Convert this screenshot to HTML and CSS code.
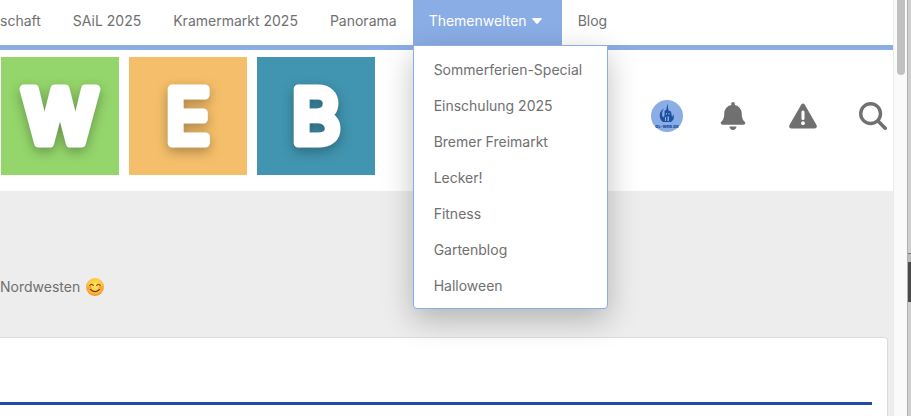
FILE: index.html
```html
<!DOCTYPE html>
<html lang="de">
<head>
  <meta charset="UTF-8">
  <meta name="viewport" content="width=device-width, initial-scale=1.0">
  <title>OL-WEB.DE</title>
  <link rel="stylesheet" href="styles.css">
</head>
<body>
  <div class="window">
    <div class="page">
      <nav class="navbar">
        <a href="#" class="nav-link first">schaft</a>
        <a href="#" class="nav-link">SAiL 2025</a>
        <a href="#" class="nav-link">Kramermarkt 2025</a>
        <a href="#" class="nav-link">Panorama</a>
        <div class="dropdown">
          <a href="#" class="nav-link active">Themenwelten
            <svg class="caret" viewBox="0 0 10 6"><path d="M1 0h8q1.200 .2.500 1.200L5.800 5.600q-.8.700-1.600 0L.5 1.200Q-.2.200 1 0z" fill="currentColor"/></svg>
          </a>
          <div class="dropdown-menu">
            <a href="#">Sommerferien-Special</a>
            <a href="#">Einschulung 2025</a>
            <a href="#">Bremer Freimarkt</a>
            <a href="#">Lecker!</a>
            <a href="#">Fitness</a>
            <a href="#">Gartenblog</a>
            <a href="#">Halloween</a>
          </div>
        </div>
        <a href="#" class="nav-link">Blog</a>
      </nav>

      <header class="header">
        <a href="#" class="logo">
          <svg class="tile green" viewBox="0 0 118 118"><text x="59" y="86">W</text></svg>
          <svg class="tile orange" viewBox="0 0 118 118"><text x="59" y="86">E</text></svg>
          <svg class="tile teal" viewBox="0 0 118 118"><text x="59" y="86">B</text></svg>
        </a>
        <div class="tools">
          <a href="#" class="avatar" aria-label="Profil">
            <svg viewBox="0 0 32 32">
              <path d="M13 8.500C7.500 11 7.500 19 12 22h8c3-2 3.500-5 2.200-8-.2 1.500-.7 2.500-1.200 3l-1-5.500-2.500-1-1-7-1.200 6-1.800 1.500v5l-1.500 1.500c-1.500-2.500-1.300-6 1-9z" fill="#1f509e"/>
              <path d="M15 13h1v1.500h-1zM17.500 13h1v1.500h-1zM14 17h1v4h-1zM16.500 16.500H18V21h-1.500z" fill="#8aade5"/>
              <text x="16" y="27.500">OL-WEB.DE</text>
            </svg>
          </a>
          <div class="actions">
            <button type="button" class="icon-btn" aria-label="Benachrichtigungen">
              <svg viewBox="-32 0 512 512"><path fill="currentColor" d="M224 512c35.320 0 63.970-28.650 63.970-64H160.030c0 35.350 28.650 64 63.970 64zm215.390-149.710c-19.320-20.760-55.470-51.990-55.470-154.290 0-77.700-54.480-139.900-127.940-155.160V32c0-17.670-14.320-32-31.980-32s-31.980 14.330-31.980 32v20.840C118.560 68.100 64.080 130.300 64.080 208c0 102.300-36.150 133.530-55.470 154.290-6 6.450-8.660 14.160-8.610 21.710.11 16.400 12.980 32 32.100 32h383.800c19.120 0 32-15.600 32.100-32 .05-7.550-2.610-15.270-8.610-21.710z"/></svg>
            </button>
            <button type="button" class="icon-btn" aria-label="Melden">
              <svg viewBox="0 0 28 28">
                <path fill="currentColor" d="M12.300 2.600q1.700-2 3.400 0l11.800 20.300q1.200 3.200-1.900 3.600H2.400q-3.100-.4-1.900-3.600z"/>
                <path d="M14 10v6.500" stroke="#fff" stroke-width="3" stroke-linecap="round"/>
                <circle cx="14" cy="21.200" r="1.900" fill="#fff"/>
              </svg>
            </button>
            <button type="button" class="icon-btn" aria-label="Suche">
              <svg viewBox="0 0 28 28" fill="none" stroke="currentColor" stroke-linecap="round">
                <circle cx="11.600" cy="11.600" r="9.900" stroke-width="3.400"/>
                <path d="M19 19l7.200 7.200" stroke-width="3.600"/>
              </svg>
            </button>
          </div>
        </div>
      </header>

      <main>
        <p class="intro">Nordwesten
          <svg class="smiley" viewBox="0 0 20 20" role="img" aria-label="Smiley">
            <defs>
              <radialGradient id="face" cx="50%" cy="40%" r="60%">
                <stop offset="0" stop-color="#ffe45c"/>
                <stop offset=".65" stop-color="#fdc63a"/>
                <stop offset="1" stop-color="#ef8e22"/>
              </radialGradient>
            </defs>
            <circle cx="10" cy="10" r="9" fill="url(#face)"/>
            <circle cx="4.500" cy="11" r="2.200" fill="#f5803a" opacity=".5"/>
            <circle cx="15.500" cy="11" r="2.200" fill="#f5803a" opacity=".5"/>
            <path d="M4.800 8.500q1.800-2.600 3.500 0M11.700 8.500q1.800-2.600 3.500 0M5.500 12.500q4.500 4.200 9 0" fill="none" stroke="#6b3c12" stroke-width="1.100" stroke-linecap="round"/>
          </svg>
        </p>
        <section class="card">
          <hr class="line">
        </section>
      </main>
    </div>

    <div class="scrollbar"><div class="thumb"></div></div>
    <div class="edge"><div class="edge-dark"></div></div>
  </div>
</body>
</html>
```

FILE: styles.css
```css
* {
  box-sizing: border-box;
}

body {
  margin: 0;
  font-family: Inter, "Liberation Sans", sans-serif;
  font-size: 14px;
  color: #707070;
  background-color: #ededed;
}

a {
  color: inherit;
  text-decoration: none;
}

.window {
  display: flex;
  height: 100vh;
  overflow: hidden;
}

.page {
  flex: 1;
  min-width: 0;
  display: flex;
  flex-direction: column;
}

/* navigation */
.navbar {
  display: flex;
  background-color: #fff;
  border-bottom: 5px solid #8aade5;
}

.nav-link {
  display: flex;
  align-items: center;
  gap: 5px;
  height: 45px;
  padding: 0 16px 4px;
  white-space: nowrap;
}

.nav-link.first {
  padding-left: 0;
}

.nav-link.active {
  background-color: #8aade5;
  color: #fff;
  padding-right: 20px;
}

.caret {
  width: 10px;
  height: 6px;
}

.dropdown {
  position: relative;
}

.dropdown-menu {
  position: absolute;
  top: 100%;
  left: 0;
  z-index: 10;
  min-width: 195px;
  padding: 6px 0 4px;
  background-color: #fff;
  border: 1px solid #8aade5;
  border-radius: 0 0 4px 4px;
  box-shadow: 0 10px 30px rgba(0, 0, 0, 0.25);
}

.dropdown-menu a {
  display: block;
  padding: 0 20px;
  line-height: 36px;
  white-space: nowrap;
}

/* header with logo */
.header {
  display: flex;
  justify-content: space-between;
  padding: 7px 6px 16px 1px;
  background-color: #fff;
}

.logo {
  display: flex;
  gap: 10px;
}

.tile {
  width: 118px;
  height: 118px;
}

.tile text {
  font-family: Inter, sans-serif;
  font-size: 74px;
  font-weight: 400;
  text-anchor: middle;
  fill: #fff;
  stroke: #fff;
  stroke-width: 9px;
  stroke-linejoin: round;
  filter: drop-shadow(0 4px 6px rgba(0, 0, 0, 0.3));
}

.tile.green text {
  font-weight: 600;
}

.green {
  background-color: #94d66b;
}

.orange {
  background-color: #f5be6a;
}

.teal {
  background-color: #4195b0;
}

.tools {
  display: flex;
  align-items: center;
  gap: 36px;
}

.avatar {
  width: 32px;
  height: 32px;
  border-radius: 50%;
  background-color: #8aade5;
}

.avatar svg {
  display: block;
}

.avatar text {
  font-size: 4px;
  font-weight: 900;
  text-anchor: middle;
  fill: #1f509e;
}

.actions {
  display: flex;
  gap: 42px;
}

.icon-btn {
  width: 28px;
  height: 28px;
  padding: 0;
  border: none;
  background: none;
  color: #707070;
  cursor: pointer;
}

.icon-btn svg {
  display: block;
  width: 100%;
}

/* content */
main {
  flex: 1;
  display: flex;
  flex-direction: column;
}

.intro {
  display: flex;
  align-items: center;
  gap: 5px;
  height: 146px;
  margin: 0;
  padding-top: 45px;
}

.smiley {
  width: 20px;
  height: 20px;
}

.card {
  flex: 1;
  margin-right: 5px;
  padding: 64px 15px 0 0;
  background-color: #fff;
  border: 1px solid #dcdcdc;
  border-width: 1px 1px 0 0;
  border-radius: 0 4px 0 0;
}

.line {
  height: 3px;
  margin: 0;
  border: none;
  background-color: #204ca5;
}

/* scrollbar and window edge */
.scrollbar {
  width: 14px;
  padding-left: 3px;
  background-color: #fafafa;
  border-left: 1px solid #ebebeb;
}

.thumb {
  width: 8px;
  height: 75px;
  border-radius: 0 0 4px 4px;
  background-color: #c1c1c1;
}

.edge {
  width: 4px;
  padding-top: 253px;
  background-color: #cfcfcf;
  border-left: 1px solid #b0b0b0;
}

.edge-dark {
  height: 49px;
  border-top: 1px solid #777;
  background: linear-gradient(#bbb 8px, #4a4a4a 8px);
}
```
